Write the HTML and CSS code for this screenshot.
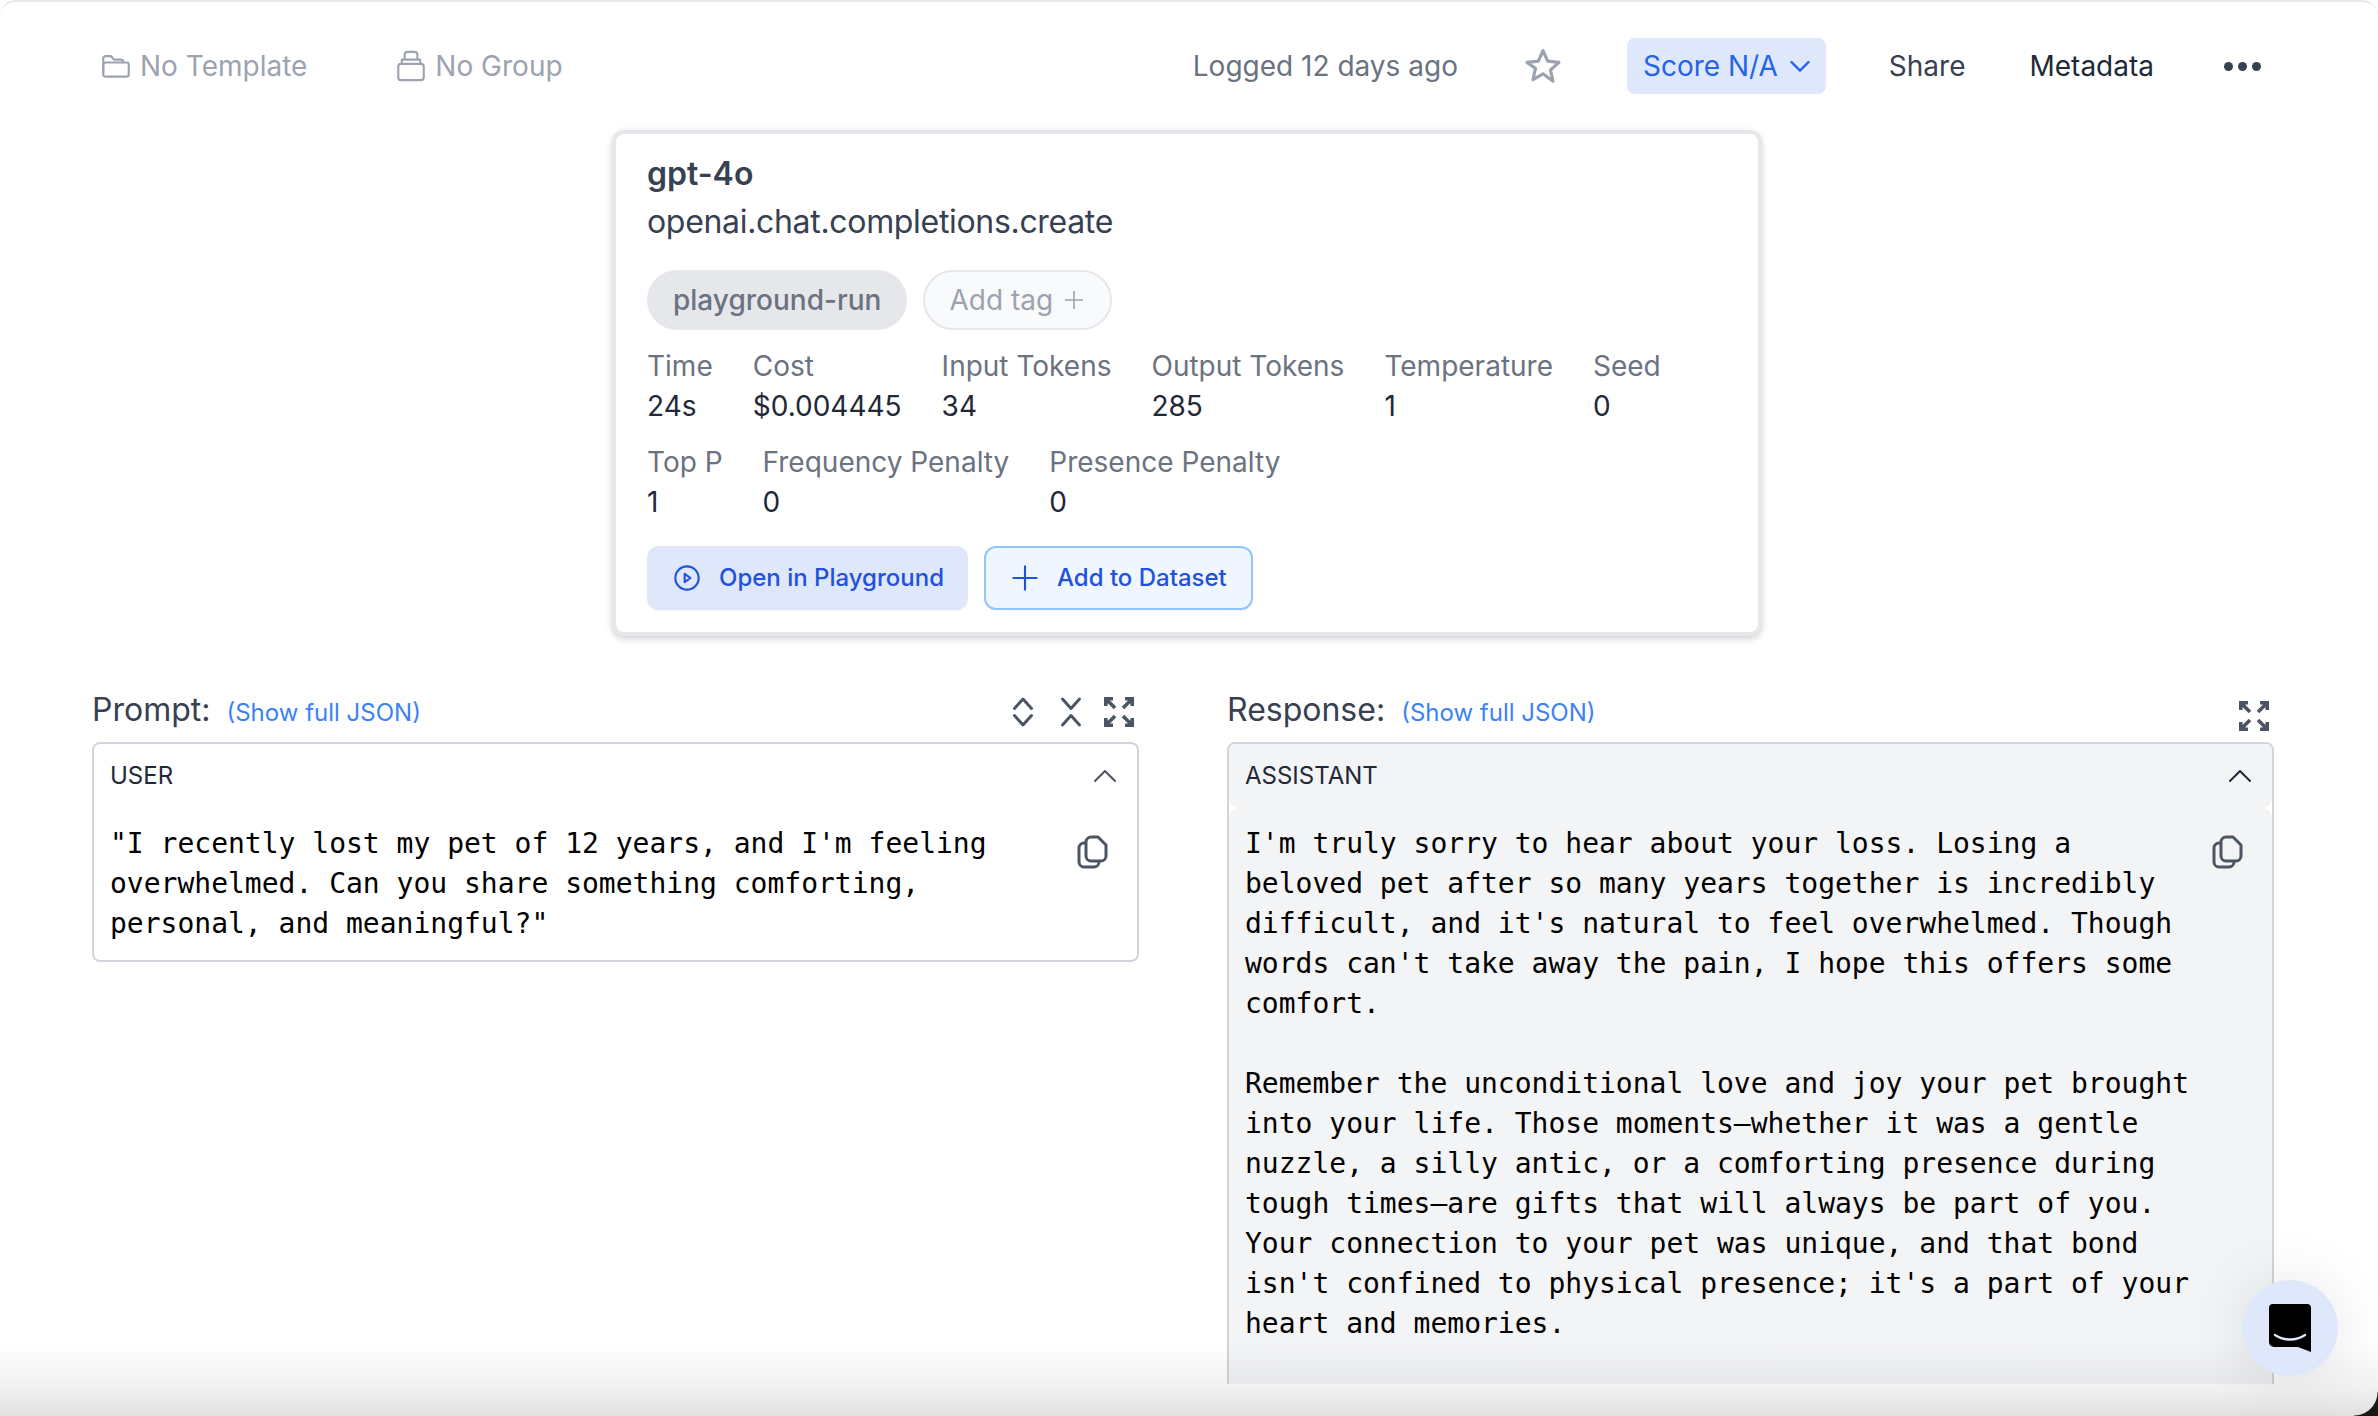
FILE: index.html
```html
<!DOCTYPE html>
<html lang="en">
<head>
<meta charset="utf-8">
<title>Request log</title>
<link rel="stylesheet" href="styles.css">
</head>
<body>
<div class="page">
  <header class="topbar">
    <div class="topbar-left">
      <span class="crumb">
        <svg class="crumb-icon" viewBox="0 0 24 24" fill="none" stroke="currentColor" stroke-width="1.500" stroke-linejoin="round" stroke-linecap="round"><path d="M3 17V6.500A1.500 1.500 0 0 1 4.500 5h4l2 2.500h5A1.500 1.500 0 0 1 17 9v.5"/><path d="M3 17.500v-6a2 2 0 0 1 2-2h14.500a1.500 1.500 0 0 1 1.500 1.500v7a1.500 1.500 0 0 1-1.500 1.500H4.500A1.500 1.500 0 0 1 3 18.500z"/></svg>
        No Template
      </span>
      <span class="crumb">
        <svg class="crumb-icon" viewBox="0 0 24 24" fill="none" stroke="currentColor" stroke-width="1.500" stroke-linejoin="round"><rect x="3" y="10.500" width="18" height="11.500" rx="2"/><path d="M5.500 10.500V7.500h13v3"/><path d="M7.500 7.500V4a2 2 0 0 1 2-2h5a2 2 0 0 1 2 2v3.500"/></svg>
        No Group
      </span>
    </div>
    <div class="topbar-right">
      <span class="logged">Logged 12 days ago</span>
      <svg class="star" viewBox="0 0 24 24" fill="none" stroke="currentColor" stroke-width="1.900" stroke-linejoin="round"><path d="M12 2.800l2.800 6.300 6.800.7-5.100 4.600 1.500 6.800L12 16.700l-6 3.500 1.500-6.800L2.400 9.800l6.800-.7z"/></svg>
      <span class="score">Score N/A
        <svg class="score-caret" viewBox="0 0 20 20" fill="none" stroke="currentColor" stroke-width="1.800" stroke-linecap="round" stroke-linejoin="round"><path d="M3.500 7l6.500 6.500L16.500 7"/></svg>
      </span>
      <span class="top-link share">Share</span>
      <span class="top-link metadata">Metadata</span>
      <span class="dots"><i></i><i></i><i></i></span>
    </div>
  </header>

  <section class="card">
    <div class="model">gpt-4o</div>
    <div class="method">openai.chat.completions.create</div>
    <div class="tags">
      <span class="tag tag-filled">playground-run</span>
      <span class="tag tag-add">Add tag
        <svg class="tag-plus" viewBox="0 0 18 18" fill="none" stroke="currentColor" stroke-width="1.600"><path d="M9 0v18M0 9h18"/></svg>
      </span>
    </div>
    <div class="stats">
      <div class="stat"><div class="stat-label">Time</div><div class="stat-value">24s</div></div>
      <div class="stat"><div class="stat-label">Cost</div><div class="stat-value">$0.004445</div></div>
      <div class="stat"><div class="stat-label">Input Tokens</div><div class="stat-value">34</div></div>
      <div class="stat"><div class="stat-label">Output Tokens</div><div class="stat-value">285</div></div>
      <div class="stat"><div class="stat-label">Temperature</div><div class="stat-value">1</div></div>
      <div class="stat"><div class="stat-label">Seed</div><div class="stat-value">0</div></div>
    </div>
    <div class="stats stats-second">
      <div class="stat"><div class="stat-label">Top P</div><div class="stat-value">1</div></div>
      <div class="stat"><div class="stat-label">Frequency Penalty</div><div class="stat-value">0</div></div>
      <div class="stat"><div class="stat-label">Presence Penalty</div><div class="stat-value">0</div></div>
    </div>
    <div class="actions">
      <span class="btn btn-solid">
        <svg class="btn-icon" viewBox="0 0 24 24" fill="none" stroke="currentColor" stroke-width="1.800" stroke-linejoin="round"><circle cx="12" cy="12" r="10"/><path d="M10 8.500l5 3.500-5 3.500z"/></svg>
        Open in Playground
      </span>
      <span class="btn btn-outline">
        <svg class="btn-icon" viewBox="0 0 24 24" fill="none" stroke="currentColor" stroke-width="1.800" stroke-linecap="round"><path d="M12 2v20M2 12h20"/></svg>
        Add to Dataset
      </span>
    </div>
  </section>

  <main class="columns">
    <section class="column">
      <div class="col-head">
        <div class="col-label">
          <span class="col-title">Prompt:</span>
          <span class="json-link">(Show full JSON)</span>
        </div>
        <span class="col-tools">
          <svg class="tool" viewBox="0 0 32 32" fill="none" stroke="currentColor" stroke-width="3" stroke-linecap="round" stroke-linejoin="round"><path d="M7.500 12.500L16 3l8.500 9.500M7.500 19.500L16 29l8.500-9.500"/></svg>
          <svg class="tool" viewBox="0 0 32 32" fill="none" stroke="currentColor" stroke-width="3" stroke-linecap="round" stroke-linejoin="round"><path d="M7.500 3l8.500 9.500L24.500 3M7.500 29l8.500-9.500 8.500 9.500"/></svg>
          <svg class="tool" viewBox="0 0 32 32" fill="none" stroke="currentColor" stroke-width="3.600"><path d="M2.800 10V2.800H10M22 2.800h7.200V10M2.800 22v7.200H10M29.200 22v7.200H22M3 3l9 9M29 3l-9 9M3 29l9-9M29 29l-9-9"/></svg>
        </span>
      </div>
      <div class="message">
        <div class="msg-head"><span>USER</span>
          <svg class="chev chev-soft" viewBox="0 0 24 24" fill="none" stroke="currentColor" stroke-width="2" stroke-linecap="round" stroke-linejoin="round"><path d="M2 17L12 7l10 10"/></svg>
        </div>
        <div class="msg-body">
          <pre class="msg-text">"I recently lost my pet of 12 years, and I'm feeling
overwhelmed. Can you share something comforting,
personal, and meaningful?"</pre>
          <svg class="copy" viewBox="0 0 32 34" fill="none" stroke="currentColor" stroke-width="3" stroke-linejoin="round"><path d="M9 8H7a5 5 0 0 0-5 5v14a5 5 0 0 0 5 5h10a5 5 0 0 0 5-5v-1"/><path d="M9 7a5 5 0 0 1 5-5h7l8 8v11a5 5 0 0 1-5 5H14a5 5 0 0 1-5-5z"/></svg>
        </div>
      </div>
    </section>
    <section class="column">
      <div class="col-head">
        <div class="col-label">
          <span class="col-title">Response:</span>
          <span class="json-link">(Show full JSON)</span>
        </div>
        <span class="col-tools col-tools-low">
          <svg class="tool" viewBox="0 0 32 32" fill="none" stroke="currentColor" stroke-width="3.600"><path d="M2.800 10V2.800H10M22 2.800h7.200V10M2.800 22v7.200H10M29.200 22v7.200H22M3 3l9 9M29 3l-9 9M3 29l9-9M29 29l-9-9"/></svg>
        </span>
      </div>
      <div class="message message-assistant">
        <div class="msg-head"><span>ASSISTANT</span>
          <svg class="chev" viewBox="0 0 24 24" fill="none" stroke="currentColor" stroke-width="2" stroke-linecap="round" stroke-linejoin="round"><path d="M2 17L12 7l10 10"/></svg>
        </div>
        <div class="msg-body">
          <pre class="msg-text">I'm truly sorry to hear about your loss. Losing a
beloved pet after so many years together is incredibly
difficult, and it's natural to feel overwhelmed. Though
words can't take away the pain, I hope this offers some
comfort.

Remember the unconditional love and joy your pet brought
into your life. Those moments—whether it was a gentle
nuzzle, a silly antic, or a comforting presence during
tough times—are gifts that will always be part of you.
Your connection to your pet was unique, and that bond
isn't confined to physical presence; it's a part of your
heart and memories.</pre>
          <svg class="copy" viewBox="0 0 32 34" fill="none" stroke="currentColor" stroke-width="3" stroke-linejoin="round"><path d="M9 8H7a5 5 0 0 0-5 5v14a5 5 0 0 0 5 5h10a5 5 0 0 0 5-5v-1"/><path d="M9 7a5 5 0 0 1 5-5h7l8 8v11a5 5 0 0 1-5 5H14a5 5 0 0 1-5-5z"/></svg>
        </div>
      </div>
    </section>
  </main>

  <div class="bottom-fade"></div>
  <div class="chat-bubble">
    <svg class="chat-icon" viewBox="0 0 42 48" aria-hidden="true"><path d="M4 0h34a4 4 0 0 1 4 4v44l-13-5H5a5 5 0 0 1-5-5V4a4 4 0 0 1 4-4z" fill="#000"/><path d="M6 31c9 6 21 6 30 0" fill="none" stroke="#dee8fa" stroke-width="2.400" stroke-linecap="round"/></svg>
  </div>
  <div class="corner"></div>
</div>
</body>
</html>
```

FILE: styles.css
```css
* { box-sizing: border-box; }
html, body { margin: 0; height: 100%; }
body {
  font-family: Inter, "Liberation Sans", sans-serif;
  font-size: 28px;
  line-height: 40px;
  color: #1f2937;
  background: #fff;
  overflow: hidden;
}
.page {
  position: relative;
  width: 2378px;
  height: 1416px;
  overflow: hidden;
  border-top: 2px solid #e5e7eb;
  border-top-left-radius: 16px;
  border-top-right-radius: 16px;
}
.topbar {
  display: flex;
  justify-content: space-between;
  align-items: center;
  height: 128px;
  padding: 0 117px 0 99px;
}
.topbar-left { display: flex; align-items: center; gap: 87px; }
.crumb {
  display: flex;
  align-items: center;
  gap: 7px;
  color: #9ca3af;
}
.crumb-icon { width: 34px; height: 34px; }
.topbar-right { display: flex; align-items: center; }
.logged { color: #6b7280; }
.star { width: 40px; height: 40px; margin-left: 65px; color: #9ca3af; }
.score {
  display: flex;
  align-items: center;
  gap: 9px;
  height: 56px;
  margin-left: 64px;
  padding: 0 13px 0 16px;
  border-radius: 8px;
  background: #dee8fa;
  color: #2563eb;
}
.score-caret { width: 26px; height: 26px; }
.top-link { margin-left: 63px; color: #374151; }
.metadata { margin-left: 64px; color: #1f2937; }
.dots { display: flex; gap: 5px; margin-left: 70px; }
.dots i { width: 9px; height: 9px; border-radius: 50%; background: #374151; }

.card {
  width: 1150px;
  height: 506px;
  margin-left: 612px;
  padding: 16px 31px;
  border: 4px solid #e5e7eb;
  border-radius: 12px;
  background: #fff;
  box-shadow: 0 4px 8px -1px rgba(0,0,0,.12), 0 2px 6px -2px rgba(0,0,0,.1), 0 0 8px rgba(0,0,0,.05);
}
.model { font-size: 32px; font-weight: 600; color: #374151; line-height: 48px; }
.method { color: #374151; font-size: 32px; line-height: 48px; letter-spacing: -.32px; }
.tags { display: flex; gap: 16px; margin-top: 24px; }
.tag {
  display: flex;
  align-items: center;
  height: 60px;
  padding: 0 26px;
  border-radius: 30px;
}
.tag-filled { background: #e5e7eb; color: #6b7280; font-weight: 500; }
.tag-add {
  gap: 12px;
  padding: 0 27px 0 24px;
  background: #f9fafb;
  border: 2px solid #e5e7eb;
  color: #9ca3af;
}
.tag-plus { width: 18px; height: 18px; }
.stats { display: flex; gap: 40px; margin-top: 16px; }
.stats-second { margin-top: 16px; }
.stat-label { color: #6b7280; }
.stat-value { color: #1f2937; }
.actions { display: flex; gap: 16px; margin-top: 24px; }
.btn {
  display: flex;
  align-items: center;
  height: 64px;
  border-radius: 12px;
  color: #2251db;
  font-size: 24px;
  font-weight: 500;
  box-shadow: 0 1px 2px rgba(0,0,0,.05);
}
.btn-solid { background: #dee8fa; padding: 0 24px 0 26px; gap: 18px; }
.btn-outline { background: #eff6ff; border: 2px solid #93c5fd; padding: 0 24px 0 25px; gap: 18px; }
.btn-icon { width: 28px; height: 28px; }

.columns {
  display: grid;
  grid-template-columns: 1047px 1047px;
  gap: 88px;
  margin-top: 48px;
  padding-left: 92px;
}
.col-head { display: flex; align-items: center; height: 52px; margin-bottom: 6px; padding-top: 2px; }
.col-label { display: flex; align-items: baseline; line-height: 48px; }
.col-title { font-size: 32px; color: #374151; }
.json-link { margin-left: 16px; font-size: 24px; color: #3b82f6; }
.col-tools { display: flex; gap: 16px; margin-left: auto; margin-right: 4px; padding-top: 2px; color: #4b5563; }
.col-tools-low { padding-top: 10px; margin-right: 4px; }
.tool { width: 32px; height: 32px; }
.message {
  border: 2px solid #d1d5db;
  border-radius: 8px;
  background: #fff;
  overflow: hidden;
}
.msg-head {
  display: flex;
  justify-content: space-between;
  align-items: center;
  height: 64px;
  padding: 0 20px 0 16px;
  font-size: 24px;
  color: #1f2937;
}
.chev { width: 24px; height: 24px; color: #1f2937; }
.chev-soft { color: #4b5563; }
.msg-body { position: relative; padding: 16px 16px 16px; }
.message-assistant { min-height: 700px; }
.message-assistant .msg-head { background: #f3f4f6; border-radius: 0 0 10px 10px; }
.message-assistant .msg-body { background: #f3f4f6; border-radius: 10px 10px 0 0; min-height: 640px; }
.msg-text {
  margin: 0;
  font-family: "DejaVu Sans Mono", monospace;
  font-size: 28px;
  line-height: 40px;
  color: #000;
}
.copy {
  position: absolute;
  top: 27px;
  right: 28px;
  width: 32px;
  height: 34px;
  color: #4b5563;
}
.bottom-fade {
  position: absolute;
  left: 0;
  right: 0;
  bottom: 0;
  height: 32px;
  background: #fff;
}
.bottom-fade::before {
  content: "";
  position: absolute;
  left: 0;
  right: 0;
  bottom: 0;
  height: 76px;
  background: linear-gradient(to bottom, rgba(0,0,0,0), rgba(0,0,0,.03) 36%, rgba(0,0,0,.06) 66%, rgba(0,0,0,.12));
}
.chat-bubble {
  position: absolute;
  right: 40px;
  bottom: 40px;
  width: 96px;
  height: 96px;
  display: flex;
  align-items: center;
  justify-content: center;
  border-radius: 50%;
  background: #dee8fa;
  box-shadow: 0 0 60px rgba(0,0,0,.1);
}
.chat-icon { width: 42px; height: 48px; }
.corner {
  position: absolute;
  right: 0;
  bottom: 0;
  width: 24px;
  height: 24px;
  background: radial-gradient(circle at 0 0, transparent 23px, #1a1a14 24px);
}
```
